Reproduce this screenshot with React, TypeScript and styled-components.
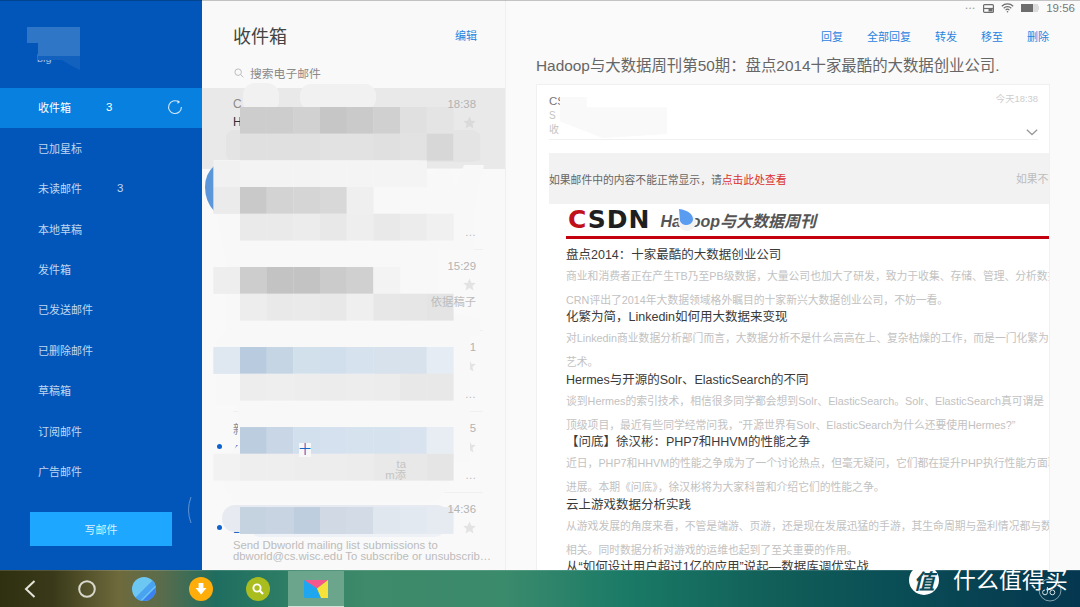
// App.tsx
import React from "react";
import styled, { createGlobalStyle } from "styled-components";

const FONT = `"Liberation Sans", "Noto Sans CJK SC", sans-serif`;

interface MailRow {
  active?: boolean;
  unread?: boolean;
  sender?: string;
  time?: string;
  subject?: string;
  subjectBlue?: boolean;
  mark?: string;
  lines?: string[];
  scraps?: string[];
}

const NAV_ITEMS: { label: string; count?: string; active?: boolean }[] = [
  { label: "收件箱", count: "3", active: true },
  { label: "已加星标" },
  { label: "未读邮件", count: "3" },
  { label: "本地草稿" },
  { label: "发件箱" },
  { label: "已发送邮件" },
  { label: "已删除邮件" },
  { label: "草稿箱" },
  { label: "订阅邮件" },
  { label: "广告邮件" },
];

const MAIL_ROWS: MailRow[] = [
  { active: true, sender: "C", time: "18:38", subject: "H" },
  { lines: ["", "…"] },
  { time: "15:29", lines: ["依据稿子"] },
  { time: "1", lines: ["", "…"] },
  {
    unread: true,
    sender: "新",
    time: "5",
    subject: "A",
    subjectBlue: true,
    mark: "十",
    lines: ["", "…"],
    scraps: ["ta", "m添"],
  },
  {
    unread: true,
    time: "14:36",
    subject: "Dbworld",
    subjectBlue: true,
    lines: [
      "Send Dbworld mailing list submissions to",
      "dbworld@cs.wisc.edu To subscribe or unsubscrib…",
    ],
  },
];

const ARTICLES: { title: string; lines: string[] }[] = [
  {
    title: "盘点2014：十家最酷的大数据创业公司",
    lines: [
      "商业和消费者正在产生TB乃至PB级数据，大量公司也加大了研发，致力于收集、存储、管理、分析数据",
      "CRN评出了2014年大数据领域格外瞩目的十家新兴大数据创业公司，不妨一看。",
    ],
  },
  {
    title: "化繁为简，Linkedin如何用大数据来变现",
    lines: [
      "对Linkedin商业数据分析部门而言，大数据分析不是什么高高在上、复杂枯燥的工作，而是一门化繁为简的",
      "艺术。",
    ],
  },
  {
    title: "Hermes与开源的Solr、ElasticSearch的不同",
    lines: [
      "谈到Hermes的索引技术，相信很多同学都会想到Solr、ElasticSearch。Solr、ElasticSearch真可谓是",
      "顶级项目，最近有些同学经常问我，“开源世界有Solr、ElasticSearch为什么还要使用Hermes?”",
    ],
  },
  {
    title: "【问底】徐汉彬：PHP7和HHVM的性能之争",
    lines: [
      "近日，PHP7和HHVM的性能之争成为了一个讨论热点，但毫无疑问，它们都在提升PHP执行性能方面取得",
      "进展。本期《问底》，徐汉彬将为大家科普和介绍它们的性能之争。",
    ],
  },
  {
    title: "云上游戏数据分析实践",
    lines: [
      "从游戏发展的角度来看，不管是端游、页游，还是现在发展迅猛的手游，其生命周期与盈利情况都与数据",
      "相关。同时数据分析对游戏的运维也起到了至关重要的作用。",
    ],
  },
  { title: "从“如何设计用户超过1亿的应用”说起—数据库调优实战", lines: [] },
];

// the pixelated redaction over the mail list: [grid row, first column, colours]
const MOSAIC: [number, number, string[]][] = [
  [0, 0, ["#cdcdcd", "#cdcdcd", "#d1d1d1", "#c6c6c6", "#cacaca", "#d0d0d0", "#e0e0e0", "#e4e4e4"]],
  [1, 0, ["#e0e0e0", "#e0e0e0", "#e0e0e0", "#e2e2e2", "#e2e2e2", "#e0e0e0", "#e2e2e2", "#d7d7d7", "#e4e4e4"]],
  [2, -1, ["#f1f1f1", "#f3f3f3", "#f3f3f3", "#f3f3f3", "#f4f4f4", "#f4f4f4", "#f4f4f4", "#f4f4f4"]],
  [3, -1, ["#ebebeb", "#c9c9c9", "#d3d3d3", "#d5d5d5", "#d8d8d8", "#efefef"]],
  [4, 0, ["#eaeaea", "#eaeaea", "#ececec", "#e8e8e8", "#eeeeee", "#e9e9e9", "#ececec", "#f0f0f0"]],
  [6, -1, ["#eeeeee", "#cdcdcd", "#c3c3c3", "#c3c3c3", "#cbcbcb", "#d0d0d0", "#f3f3f3"]],
  [7, 0, ["#ededed", "#e9e9e9", "#eaeaea", "#e8e8e8", "#efefef", "#e7e7e7", "#e6e6e6", "#e4e4e4"]],
  [9, -1, ["#dfe8f1", "#b9ccdf", "#c6d5e4", "#d2e0ec", "#d1dfec", "#d6e2ee", "#d7e2ed", "#d7e2ed", "#e5ecf3"]],
  [10, 0, ["#ededed", "#eeeeee", "#ededed", "#ececec", "#ededed", "#ececec", "#e8e8e8", "#e8e8e8"]],
  [12, 0, ["#bdcde0", "#c8d6e5", "#d2e0ee", "#d5e1ef", "#d6e2ee", "#d6e2ee", "#d8e3ef", "#e8edf3"]],
  [13, -1, ["#f2f2f2", "#eeeeee", "#eeeeee", "#ededed", "#ededed", "#ececec", "#e9e9e9", "#e8e8e8", "#e5e5e5"]],
  [15, 0, ["#c5d2e0", "#c8d4e2", "#bfcede", "#d0d9e4", "#d2dbe6", "#e0e7ef", "#e3e9f1", "#e6ebf2"]],
];

function ListRedaction() {
  return (
    <RedactionLayer viewBox="202 0 303 570" aria-hidden="true">
      <path d="M214 166 Q205 174 205 187 Q205 201 214 211 Z" fill="#5b97d8" />
      <rect x="243" y="83" width="36" height="30" rx="12" fill="#f1f1f1" />
      <rect x="300" y="84" width="76" height="26" rx="11" fill="#f1f1f1" />
      <rect x="226" y="130" width="254" height="32" rx="8" fill="#e4e4e4" />
      <path
        d="M214 160 H418 L426 176 L438 169 H450 L455 188 L464 165 H484 L474 210 V250 H438 V312 L480 318 V336 H470 V462 H452 Q450 500 430 503 H240 Q222 500 222 462 L238 445 V405 H216 V340 L226 330 V260 L214 200 Z"
        fill="#f8f8f8"
      />
      <rect x="222" y="505" width="228" height="27" rx="13" fill="#e7ebf1" />
      <rect x="250" y="510" width="195" height="27" rx="10" fill="#eef1f5" />
      {MOSAIC.map(([row, col, colours]) =>
        colours.map((colour, i) => (
          <rect
            key={`${row}-${i}`}
            x={240 + (col + i) * 26.67}
            y={107 + row * 26.67}
            width={26.9}
            height={26.9}
            fill={colour}
          />
        ))
      )}
    </RedactionLayer>
  );
}

function StarIcon() {
  return (
    <svg width="13" height="13" viewBox="0 0 24 24">
      <path d="M12 1l3.4 7.6 8.2.8-6.2 5.4 1.9 8.1L12 18.6l-7.3 4.3 1.9-8.1L.4 9.4l8.2-.8z" fill="currentColor" />
    </svg>
  );
}

function SearchIcon() {
  return (
    <svg width="10" height="10" viewBox="0 0 12 12" fill="none" stroke="#bdbdbd" strokeWidth="1.2">
      <circle cx="5" cy="5" r="3.9" />
      <path d="M8 8l3.2 3.2" />
    </svg>
  );
}

function SpinnerIcon() {
  return (
    <svg width="16" height="16" viewBox="0 0 16 16" fill="none" stroke="#cfe6fb" strokeWidth="1.1">
      <path d="M11.5 2.8A6.4 6.4 0 1 0 14.4 8" />
      <path d="M10.6 1.6l1.6 1.4-1.8 1.2" />
    </svg>
  );
}

function StatusIcons() {
  return (
    <>
      <StatusDots>•••</StatusDots>
      <svg width="11" height="9" viewBox="0 0 11 9" fill="none" stroke="#6d6d6d" strokeWidth="1.2">
        <rect x="0.6" y="0.6" width="9.8" height="7.8" rx="1" />
        <path d="M1 4.5h9" />
        <rect x="5.5" y="4.5" width="4" height="3" fill="#6d6d6d" stroke="none" />
      </svg>
      <svg width="13" height="10" viewBox="0 0 13 10" fill="none" stroke="#6d6d6d" strokeWidth="1.2">
        <path d="M.8 3.2a8.2 8.2 0 0 1 11.4 0" />
        <path d="M2.7 5.2a5.4 5.4 0 0 1 7.6 0" />
        <path d="M4.6 7.1a2.7 2.7 0 0 1 3.8 0" />
        <circle cx="6.5" cy="8.8" r=".8" fill="#6d6d6d" stroke="none" />
      </svg>
      <svg width="18" height="8" viewBox="0 0 18 8">
        <rect x="0" y="0" width="17" height="8" fill="#dcdcdc" />
        <rect x="0" y="0" width="12" height="8" fill="#6d6d6d" />
        <rect x="17" y="2" width="1" height="4" fill="#dcdcdc" />
      </svg>
      <StatusTime>19:56</StatusTime>
    </>
  );
}

function DockIcons() {
  return (
    <>
      <DockSlot>
        <svg width="12" height="18" viewBox="0 0 12 18" fill="none" stroke="#e4e4da" strokeWidth="2">
          <path d="M10.5 1L2 9l8.5 8" />
        </svg>
      </DockSlot>
      <DockSlot>
        <svg width="18" height="18" viewBox="0 0 18 18" fill="none" stroke="#d8d8cc" strokeWidth="2">
          <circle cx="9" cy="9" r="7.8" />
        </svg>
      </DockSlot>
      <DockSlot>
        <svg width="24" height="24" viewBox="0 0 24 24">
          <defs>
            <clipPath id="ball">
              <circle cx="12" cy="12" r="12" />
            </clipPath>
          </defs>
          <g clipPath="url(#ball)">
            <rect width="24" height="24" fill="#6cc7f3" />
            <path d="M24 0v8L8 24H0z" fill="#4aa3f0" />
            <path d="M24 10v6l-8 8h-6z" fill="#3b82f0" />
            <path d="M24 16v8h-8z" fill="#2f62e6" />
          </g>
        </svg>
      </DockSlot>
      <DockSlot>
        <svg width="24" height="24" viewBox="0 0 24 24">
          <circle cx="12" cy="12" r="12" fill="#ffad0a" />
          <path d="M9.6 6h4.8v5h3.1L12 17.4 6.5 11h3.1z" fill="#fff" />
        </svg>
      </DockSlot>
      <DockSlot>
        <svg width="24" height="24" viewBox="0 0 24 24">
          <circle cx="12" cy="12" r="12" fill="#a9bd1e" />
          <circle cx="11" cy="11" r="3.6" fill="none" stroke="#fff" strokeWidth="1.9" />
          <path d="M13.6 13.6l3.4 3.4" stroke="#fff" strokeWidth="2.1" />
        </svg>
      </DockSlot>
      <ActiveTile>
        <svg width="24" height="18" viewBox="0 0 24 18">
          <path d="M0 0h24L13 8.4z" fill="#f4588c" />
          <path d="M0 0l13 8.4L0 18z" fill="#1ea7f0" />
          <path d="M0 18l13-9.6L17 18z" fill="#1ea7f0" />
          <path d="M24 0v18h-7L13 8.4z" fill="#f5e23a" />
        </svg>
      </ActiveTile>
    </>
  );
}

export default function App() {
  return (
    <>
      <GlobalStyle />
      <Page>
        <Main>
          <Sidebar>
            <SidebarHead>big</SidebarHead>
            {NAV_ITEMS.map((item) => (
              <NavItem key={item.label} $active={item.active}>
                <span>{item.label}</span>
                {item.count && <NavCount>{item.count}</NavCount>}
                {item.active && (
                  <NavSpinner>
                    <SpinnerIcon />
                  </NavSpinner>
                )}
              </NavItem>
            ))}
            <ComposeButton>写邮件</ComposeButton>
            <SidebarRedaction viewBox="0 0 202 570" aria-hidden="true">
              <path d="M27 27H80V56H38V43H27Z" fill="#2f76c7" />
              <path d="M38 56H80V70L70 65L62 60H38Z" fill="#1261bf" />
              <path d="M191 497Q186 510 191 523" fill="none" stroke="#5f93d4" strokeWidth="1" />
            </SidebarRedaction>
          </Sidebar>

          <ListPanel>
            <ListHead>
              <ListTitle>收件箱</ListTitle>
              <BlueLink>编辑</BlueLink>
            </ListHead>
            <SearchBar>
              <SearchIcon />
              <span>搜索电子邮件</span>
            </SearchBar>
            {MAIL_ROWS.map((row, i) => (
              <Row key={i} $active={row.active}>
                {row.unread && <UnreadDot />}
                <RowLine>
                  <Sender>{row.sender}</Sender>
                  <RowTime>{row.time}</RowTime>
                </RowLine>
                <RowLine>
                  <Subject $blue={row.subjectBlue}>
                    {row.subject}
                    {row.mark && <SubjectMark>{row.mark}</SubjectMark>}
                  </Subject>
                  <RowStar $active={row.active}>
                    <StarIcon />
                  </RowStar>
                </RowLine>
                <Preview $long={i === MAIL_ROWS.length - 1}>
                  {row.lines?.map((line, j) => (
                    <PreviewLine key={j}>
                      {row.scraps && <PreviewScrap>{row.scraps[j]}</PreviewScrap>}
                      {row.scraps ? <PreviewTail>{line}</PreviewTail> : line}
                    </PreviewLine>
                  ))}
                </Preview>
              </Row>
            ))}
            <ListRedaction />
          </ListPanel>

          <Detail>
            <StatusBar>
              <StatusIcons />
            </StatusBar>
            <Actions>
              <BlueLink>回复</BlueLink>
              <BlueLink>全部回复</BlueLink>
              <BlueLink>转发</BlueLink>
              <BlueLink>移至</BlueLink>
              <BlueLink>删除</BlueLink>
            </Actions>
            <MailTitle>Hadoop与大数据周刊第50期：盘点2014十家最酷的大数据创业公司.</MailTitle>
            <Card>
              <CardHead>
                <HeadLines>
                  <HeadSender>CSDN</HeadSender>
                  <HeadMeta>S</HeadMeta>
                  <HeadMeta>收</HeadMeta>
                </HeadLines>
                <HeadSide>
                  <HeadDate>今天18:38</HeadDate>
                  <svg width="12" height="7" viewBox="0 0 12 7" fill="none" stroke="#9a9a9a" strokeWidth="1.3">
                    <path d="M.8.8L6 5.6 11.2.8" />
                  </svg>
                </HeadSide>
                <HeadMask />
              </CardHead>
              <Notice>
                <span>
                  如果邮件中的内容不能正常显示，请<NoticeLink>点击此处查看</NoticeLink>
                </span>
                <NoticeAside>如果不想</NoticeAside>
              </Notice>
              <Letter>
                <Masthead>
                  <Logo>
                    <LogoRed>C</LogoRed>SDN
                  </Logo>
                  <MastTitle>Hadoop与大数据周刊</MastTitle>
                  <TouchDrop width="20" height="24" viewBox="0 0 20 24" aria-hidden="true">
                    <ellipse cx="9" cy="14" rx="9" ry="9" fill="#f2f2f2" />
                    <path d="M1 1 Q15 3 15 12 A7 7 0 0 1 2 13 Z" fill="#5a9cf0" />
                  </TouchDrop>
                </Masthead>
                <RedRule />
                {ARTICLES.map((article) => (
                  <Article key={article.title}>
                    <ArticleTitle>{article.title}</ArticleTitle>
                    <ArticleBody>
                      {article.lines.map((line) => (
                        <div key={line}>{line}</div>
                      ))}
                    </ArticleBody>
                  </Article>
                ))}
              </Letter>
            </Card>
          </Detail>
        </Main>

        <Dock>
          <DockIcons />
          <Watermark>
            <WatermarkBadge>值</WatermarkBadge>
            <WatermarkText>什么值得买</WatermarkText>
            <WatermarkStamp width="24" height="24" viewBox="0 0 24 24" fill="none" stroke="#d5e2e4" strokeWidth="1">
              <circle cx="12" cy="12" r="11" opacity="0.6" />
              <path d="M7 12a2.4 2.4 0 1 0 2.4 2.4V9M12 14.4a2.4 2.4 0 1 0 4.8 0 2.4 2.4 0 0 0-4.8 0z" />
            </WatermarkStamp>
          </Watermark>
        </Dock>
      </Page>
    </>
  );
}

const GlobalStyle = createGlobalStyle`
  html, body {
    margin: 0;
    width: 1080px;
    height: 607px;
    overflow: hidden;
    font-family: ${FONT};
  }
`;

const Page = styled.div`
  width: 1080px;
  height: 607px;
  display: flex;
  flex-direction: column;
  overflow: hidden;
`;

const Main = styled.div`
  height: 570px;
  display: flex;
  position: relative;
  overflow: hidden;

  &::after {
    content: "";
    position: absolute;
    top: 0;
    left: 0;
    right: 0;
    height: 1px;
    background: rgba(0, 0, 0, 0.22);
  }
`;

const Sidebar = styled.aside`
  width: 202px;
  flex-shrink: 0;
  position: relative;
  background: #0356b9;
`;

const SidebarHead = styled.div`
  height: 88px;
  box-sizing: border-box;
  padding: 52px 0 0 37px;
  font-size: 11px;
  line-height: 12px;
  color: #9fc3ea;
`;

const NavItem = styled.div<{ $active?: boolean }>`
  height: 40.44px;
  box-sizing: border-box;
  padding: 0 19px 2px 38px;
  display: flex;
  align-items: center;
  font-size: 11px;
  color: ${(props) => (props.$active ? "#ffffff" : "#bfd8f2")};
  background: ${(props) => (props.$active ? "#0880e0" : "transparent")};
`;

const NavCount = styled.span`
  margin-left: 35px;
  font-size: 11.5px;
`;

const NavSpinner = styled.span`
  margin-left: auto;
  display: flex;
`;

const ComposeButton = styled.div`
  margin: 20px 30px 0;
  height: 34px;
  display: flex;
  align-items: center;
  justify-content: center;
  background: #1ea7ff;
  font-size: 11px;
  color: #d9f0ff;
`;

const SidebarRedaction = styled.svg`
  position: absolute;
  top: 0;
  left: 0;
  width: 202px;
  height: 570px;
  pointer-events: none;
`;

const ListPanel = styled.section`
  width: 304px;
  flex-shrink: 0;
  box-sizing: border-box;
  position: relative;
  background: #f9f9f9;
  border-right: 1px solid #efefef;
  overflow: hidden;
`;

const RedactionLayer = styled.svg`
  position: absolute;
  top: 0;
  left: 0;
  width: 303px;
  height: 570px;
  z-index: 1;
  pointer-events: none;
`;

const ListHead = styled.div`
  height: 54px;
  box-sizing: border-box;
  padding: 16px 28px 0 31px;
  display: flex;
  align-items: center;
  justify-content: space-between;
`;

const ListTitle = styled.div`
  font-size: 18px;
  color: #444;
`;

const BlueLink = styled.span`
  font-size: 11px;
  color: #2a83e0;
`;

const SearchBar = styled.div`
  height: 34px;
  box-sizing: border-box;
  padding: 3px 0 0 32px;
  display: flex;
  align-items: center;
  gap: 6px;
  font-size: 11.8px;
  color: #8a8a8a;
`;

const Row = styled.div<{ $active?: boolean }>`
  height: 81px;
  box-sizing: border-box;
  position: relative;
  padding: 7px 29px 0 31px;
  background: ${(props) => (props.$active ? "#e9e9e9" : "transparent")};

  &::after {
    content: "";
    position: absolute;
    left: 31px;
    right: 22px;
    bottom: 0;
    height: 1px;
    background: #f0f0f0;
  }
`;

const UnreadDot = styled.span`
  position: absolute;
  left: 15px;
  top: 32px;
  width: 5px;
  height: 5px;
  border-radius: 50%;
  background: #0d62d0;
`;

const RowLine = styled.div`
  height: 18px;
  display: flex;
  align-items: center;
  justify-content: space-between;
`;

const Sender = styled.span`
  font-size: 12px;
  color: #8c8c8c;
`;

const RowTime = styled.span`
  position: relative;
  z-index: 2;
  font-size: 11.4px;
  color: #b3b3b3;
`;

const Subject = styled.span<{ $blue?: boolean }>`
  font-size: 12px;
  color: ${(props) => (props.$blue ? "#1a66c4" : "#333")};
  padding-top: ${(props) => (props.$blue ? "4px" : "0")};
`;

const SubjectMark = styled.span`
  position: relative;
  z-index: 2;
  margin-left: 58px;
  background: #f7f7f7;
`;

const RowStar = styled.span<{ $active?: boolean }>`
  display: flex;
  color: ${(props) => (props.$active ? "#dadada" : "#e3e3e3")};
`;

const Preview = styled.div<{ $long?: boolean }>`
  margin-top: 3.5px;
  font-size: 11.3px;
  line-height: 11.2px;
  white-space: nowrap;
  color: #bcbcbc;
  text-align: ${(props) => (props.$long ? "left" : "right")};
  position: relative;
  z-index: 2;
`;

const PreviewLine = styled.div`
  min-height: 11.2px;
`;

const PreviewScrap = styled.span`
  margin-right: 59px;
  color: #c4c4c4;
`;

const PreviewTail = styled.span`
  display: inline-block;
  width: 11px;
`;

const Detail = styled.section`
  flex: 1;
  min-width: 0;
  display: flex;
  flex-direction: column;
  background: #fafafa;
`;

const StatusBar = styled.div`
  height: 16px;
  flex-shrink: 0;
  padding-right: 5px;
  display: flex;
  align-items: center;
  justify-content: flex-end;
  gap: 7px;
`;

const StatusDots = styled.span`
  font-size: 6px;
  letter-spacing: 1.5px;
  color: #a5a5a5;
`;

const StatusTime = styled.span`
  font-size: 11.5px;
  color: #777;
`;

const Actions = styled.div`
  height: 40px;
  flex-shrink: 0;
  padding-right: 31px;
  display: flex;
  align-items: center;
  justify-content: flex-end;
  gap: 24px;
`;

const MailTitle = styled.div`
  height: 20px;
  flex-shrink: 0;
  padding-left: 30px;
  font-size: 15.4px;
  line-height: 20px;
  white-space: nowrap;
  color: #666;
`;

const Card = styled.div`
  flex: 1;
  min-height: 0;
  margin: 8px 30px 0;
  display: flex;
  flex-direction: column;
  box-sizing: border-box;
  padding-left: 12px;
  background: #fff;
  border: 1px solid #f0f0f0;
  border-bottom: 0;
  overflow: hidden;
`;

const CardHead = styled.div`
  height: 55px;
  flex-shrink: 0;
  box-sizing: border-box;
  position: relative;
  margin-right: 11px;
  padding-top: 9px;
  display: flex;
  justify-content: space-between;
  border-bottom: 1px solid #f0f0f0;
`;

const HeadLines = styled.div`
  display: flex;
  flex-direction: column;
`;

const HeadSender = styled.div`
  font-size: 11.5px;
  line-height: 15px;
  color: #777;
`;

const HeadMeta = styled.div`
  font-size: 10px;
  line-height: 14px;
  color: #c4c4c4;
`;

const HeadSide = styled.div`
  display: flex;
  flex-direction: column;
  align-items: flex-end;
  justify-content: space-between;
  padding: 0 0 3px;
`;

const HeadDate = styled.div`
  margin-top: -1px;
  font-size: 9.4px;
  line-height: 12px;
  color: #cdcdcd;
`;

const HeadMask = styled.div`
  position: absolute;
  left: 11px;
  top: 12px;
  width: 107px;
  height: 41px;
  background: #f9f9f9;
  clip-path: polygon(0 0, 25% 0, 25% 25%, 100% 25%, 100% 90%, 40% 100%, 0 60%);
`;

const Notice = styled.div`
  height: 51px;
  flex-shrink: 0;
  margin-top: 13px;
  display: flex;
  align-items: center;
  justify-content: space-between;
  padding-top: 1px;
  box-sizing: border-box;
  background: #f2f2f2;
  font-size: 10.8px;
  white-space: nowrap;
  color: #666;
`;

const NoticeLink = styled.span`
  color: #d9302c;
`;

const NoticeAside = styled.span`
  width: 33px;
  overflow: hidden;
  margin-top: -3px;
  color: #bdbdbd;
`;

const Letter = styled.div`
  flex: 1;
  min-height: 0;
  padding-left: 17px;
  overflow: hidden;
`;

const Masthead = styled.div`
  height: 32px;
  padding-left: 2px;
  position: relative;
  display: flex;
  align-items: center;
  gap: 10px;
`;

const Logo = styled.div`
  font-family: "DejaVu Sans", sans-serif;
  font-size: 25px;
  line-height: 28px;
  font-weight: 700;
  letter-spacing: 1px;
  color: #1f1f1f;
`;

const LogoRed = styled.span`
  color: #c0101a;
`;

const MastTitle = styled.div`
  font-size: 16px;
  font-weight: 700;
  font-style: italic;
  white-space: nowrap;
  color: #555;
`;

const TouchDrop = styled.svg`
  position: absolute;
  left: 112px;
  top: 4px;
`;

const RedRule = styled.div`
  height: 3px;
  background: #c4000f;
  margin-bottom: 6.5px;
`;

const Article = styled.article`
  display: grid;
  grid-template-rows: 18px 44.5px;
  white-space: nowrap;
`;

const ArticleTitle = styled.div`
  font-size: 12.5px;
  line-height: 18px;
  color: #3a3a3a;
`;

const ArticleBody = styled.div`
  font-size: 10.8px;
  line-height: 24px;
  color: #c2c2c2;
`;

const Dock = styled.footer`
  height: 37px;
  flex-shrink: 0;
  position: relative;
  box-sizing: border-box;
  padding-left: 1px;
  display: flex;
  background: linear-gradient(
    90deg,
    #2f3010 0%,
    #3a3a1a 5%,
    #6e6a3c 11%,
    #5a6c4c 15%,
    #1f6d5f 20%,
    #2f7f66 27%,
    #3e8a6a 34%,
    #3a8a6c 47%,
    #1a7a66 58%,
    #115e58 72%,
    #0a4f56 82%,
    #063c50 95%,
    #053850 100%
  );
  border-top: 1px solid rgba(255, 255, 255, 0.14);
`;

const DockSlot = styled.div`
  width: 57.2px;
  display: flex;
  align-items: center;
  justify-content: center;
`;

const ActiveTile = styled.div`
  width: 56px;
  margin-left: 1px;
  display: flex;
  align-items: center;
  justify-content: center;
  box-sizing: border-box;
  background: #6aa58c;
  border-bottom: 1px solid #cfe0d6;
`;

const Watermark = styled.div`
  margin: -6px 0 0 auto;
  padding-right: 12px;
  height: 30px;
  position: relative;
  display: flex;
  align-items: center;
  gap: 14px;
`;

const WatermarkBadge = styled.div`
  width: 30px;
  height: 30px;
  display: flex;
  align-items: center;
  justify-content: center;
  border-radius: 50%;
  background: #fff;
  font-size: 21px;
  font-weight: 700;
  font-style: italic;
  color: #0b4a56;
`;

const WatermarkText = styled.div`
  font-size: 22.8px;
  line-height: 30px;
  letter-spacing: 0.2px;
  color: #fff;
`;

const WatermarkStamp = styled.svg`
  position: absolute;
  right: 18px;
  top: 13px;
`;
